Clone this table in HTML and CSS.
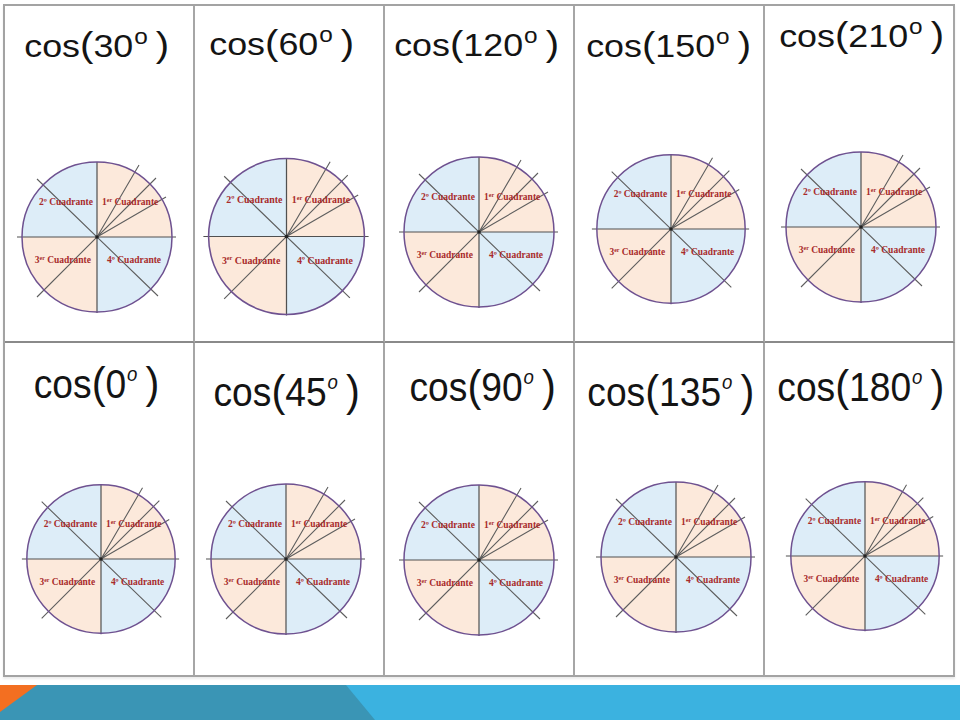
FILE: index.html
```html
<!DOCTYPE html>
<html lang="es">
<head>
<meta charset="utf-8">
<title>Cosenos por cuadrante</title>
<link rel="stylesheet" href="styles.css">
</head>
<body>
<main class="slide">
  <section class="table">
    <div class="cell top c1">
      <div class="label">cos<span class="paren">(</span>30<span class="sup">o</span><span class="paren close">)</span></div>
      <svg class="dial" viewBox="-90 -90 180 180">
        <path class="peach" d="M0 0 L0 -75 A75 75 0 0 1 75 0 Z"/>
        <path class="blue" d="M0 0 L-75 0 A75 75 0 0 1 0 -75 Z"/>
        <path class="peach" d="M0 0 L0 75 A75 75 0 0 1 -75 0 Z"/>
        <path class="blue" d="M0 0 L75 0 A75 75 0 0 1 0 75 Z"/>
        <path class="axis" d="M-80 0 H79 M0 -75 V76"/>
        <path class="ray" d="M-60 60 L59 -59 M-60 -58 L61 59 M0 0 L42 -72 M0 0 L69 -40"/>
        <circle class="rim" r="75"/>
        <circle class="dot" r="1.8"/>
        <text x="-4" y="-32" text-anchor="end">2º Cuadrante</text>
        <text x="5" y="-32">1<tspan class="ord" dy="-3">er</tspan><tspan dy="3"> Cuadrante</tspan></text>
        <text x="-6" y="26" text-anchor="end">3<tspan class="ord" dy="-3">er</tspan><tspan dy="3"> Cuadrante</tspan></text>
        <text x="10" y="26">4º Cuadrante</text>
      </svg>
    </div>
    <div class="cell top c2">
      <div class="label">cos<span class="paren">(</span>60<span class="sup">o</span><span class="paren close">)</span></div>
      <svg class="dial" viewBox="-90 -90 180 180">
        <path class="peach" d="M0 0 L0 -75 A75 75 0 0 1 75 0 Z"/>
        <path class="blue" d="M0 0 L-75 0 A75 75 0 0 1 0 -75 Z"/>
        <path class="peach" d="M0 0 L0 75 A75 75 0 0 1 -75 0 Z"/>
        <path class="blue" d="M0 0 L75 0 A75 75 0 0 1 0 75 Z"/>
        <path class="axis" d="M-80 0 H79 M0 -75 V76"/>
        <path class="ray" d="M-60 60 L59 -59 M-60 -58 L61 59 M0 0 L42 -72 M0 0 L69 -40"/>
        <circle class="rim" r="75"/>
        <circle class="dot" r="1.8"/>
        <text x="-4" y="-32" text-anchor="end">2º Cuadrante</text>
        <text x="5" y="-32">1<tspan class="ord" dy="-3">er</tspan><tspan dy="3"> Cuadrante</tspan></text>
        <text x="-6" y="26" text-anchor="end">3<tspan class="ord" dy="-3">er</tspan><tspan dy="3"> Cuadrante</tspan></text>
        <text x="10" y="26">4º Cuadrante</text>
      </svg>
    </div>
    <div class="cell top c3">
      <div class="label">cos<span class="paren">(</span>120<span class="sup">o</span><span class="paren close">)</span></div>
      <svg class="dial" viewBox="-90 -90 180 180">
        <path class="peach" d="M0 0 L0 -75 A75 75 0 0 1 75 0 Z"/>
        <path class="blue" d="M0 0 L-75 0 A75 75 0 0 1 0 -75 Z"/>
        <path class="peach" d="M0 0 L0 75 A75 75 0 0 1 -75 0 Z"/>
        <path class="blue" d="M0 0 L75 0 A75 75 0 0 1 0 75 Z"/>
        <path class="axis" d="M-80 0 H79 M0 -75 V76"/>
        <path class="ray" d="M-60 60 L59 -59 M-60 -58 L61 59 M0 0 L42 -72 M0 0 L69 -40"/>
        <circle class="rim" r="75"/>
        <circle class="dot" r="1.8"/>
        <text x="-4" y="-32" text-anchor="end">2º Cuadrante</text>
        <text x="5" y="-32">1<tspan class="ord" dy="-3">er</tspan><tspan dy="3"> Cuadrante</tspan></text>
        <text x="-6" y="26" text-anchor="end">3<tspan class="ord" dy="-3">er</tspan><tspan dy="3"> Cuadrante</tspan></text>
        <text x="10" y="26">4º Cuadrante</text>
      </svg>
    </div>
    <div class="cell top c4">
      <div class="label">cos<span class="paren">(</span>150<span class="sup">o</span><span class="paren close">)</span></div>
      <svg class="dial" viewBox="-90 -90 180 180">
        <path class="peach" d="M0 0 L0 -75 A75 75 0 0 1 75 0 Z"/>
        <path class="blue" d="M0 0 L-75 0 A75 75 0 0 1 0 -75 Z"/>
        <path class="peach" d="M0 0 L0 75 A75 75 0 0 1 -75 0 Z"/>
        <path class="blue" d="M0 0 L75 0 A75 75 0 0 1 0 75 Z"/>
        <path class="axis" d="M-80 0 H79 M0 -75 V76"/>
        <path class="ray" d="M-60 60 L59 -59 M-60 -58 L61 59 M0 0 L42 -72 M0 0 L69 -40"/>
        <circle class="rim" r="75"/>
        <circle class="dot" r="1.8"/>
        <text x="-4" y="-32" text-anchor="end">2º Cuadrante</text>
        <text x="5" y="-32">1<tspan class="ord" dy="-3">er</tspan><tspan dy="3"> Cuadrante</tspan></text>
        <text x="-6" y="26" text-anchor="end">3<tspan class="ord" dy="-3">er</tspan><tspan dy="3"> Cuadrante</tspan></text>
        <text x="10" y="26">4º Cuadrante</text>
      </svg>
    </div>
    <div class="cell top c5">
      <div class="label">cos<span class="paren">(</span>210<span class="sup">o</span><span class="paren close">)</span></div>
      <svg class="dial" viewBox="-90 -90 180 180">
        <path class="peach" d="M0 0 L0 -75 A75 75 0 0 1 75 0 Z"/>
        <path class="blue" d="M0 0 L-75 0 A75 75 0 0 1 0 -75 Z"/>
        <path class="peach" d="M0 0 L0 75 A75 75 0 0 1 -75 0 Z"/>
        <path class="blue" d="M0 0 L75 0 A75 75 0 0 1 0 75 Z"/>
        <path class="axis" d="M-80 0 H79 M0 -75 V76"/>
        <path class="ray" d="M-60 60 L59 -59 M-60 -58 L61 59 M0 0 L42 -72 M0 0 L69 -40"/>
        <circle class="rim" r="75"/>
        <circle class="dot" r="1.8"/>
        <text x="-4" y="-32" text-anchor="end">2º Cuadrante</text>
        <text x="5" y="-32">1<tspan class="ord" dy="-3">er</tspan><tspan dy="3"> Cuadrante</tspan></text>
        <text x="-6" y="26" text-anchor="end">3<tspan class="ord" dy="-3">er</tspan><tspan dy="3"> Cuadrante</tspan></text>
        <text x="10" y="26">4º Cuadrante</text>
      </svg>
    </div>

    <div class="cell bottom c6">
      <div class="label">cos<span class="paren">(</span>0<span class="sup">o</span><span class="paren close">)</span></div>
      <svg class="dial" viewBox="-90 -90 180 180">
        <path class="peach" d="M0 0 L0 -75 A75 75 0 0 1 75 0 Z"/>
        <path class="blue" d="M0 0 L-75 0 A75 75 0 0 1 0 -75 Z"/>
        <path class="peach" d="M0 0 L0 75 A75 75 0 0 1 -75 0 Z"/>
        <path class="blue" d="M0 0 L75 0 A75 75 0 0 1 0 75 Z"/>
        <path class="axis" d="M-80 0 H79 M0 -75 V76"/>
        <path class="ray" d="M-60 60 L59 -59 M-60 -58 L61 59 M0 0 L42 -72 M0 0 L69 -40"/>
        <circle class="rim" r="75"/>
        <circle class="dot" r="1.8"/>
        <text x="-4" y="-32" text-anchor="end">2º Cuadrante</text>
        <text x="5" y="-32">1<tspan class="ord" dy="-3">er</tspan><tspan dy="3"> Cuadrante</tspan></text>
        <text x="-6" y="26" text-anchor="end">3<tspan class="ord" dy="-3">er</tspan><tspan dy="3"> Cuadrante</tspan></text>
        <text x="10" y="26">4º Cuadrante</text>
      </svg>
    </div>
    <div class="cell bottom c7">
      <div class="label">cos<span class="paren">(</span>45<span class="sup">o</span><span class="paren close">)</span></div>
      <svg class="dial" viewBox="-90 -90 180 180">
        <path class="peach" d="M0 0 L0 -75 A75 75 0 0 1 75 0 Z"/>
        <path class="blue" d="M0 0 L-75 0 A75 75 0 0 1 0 -75 Z"/>
        <path class="peach" d="M0 0 L0 75 A75 75 0 0 1 -75 0 Z"/>
        <path class="blue" d="M0 0 L75 0 A75 75 0 0 1 0 75 Z"/>
        <path class="axis" d="M-80 0 H79 M0 -75 V76"/>
        <path class="ray" d="M-60 60 L59 -59 M-60 -58 L61 59 M0 0 L42 -72 M0 0 L69 -40"/>
        <circle class="rim" r="75"/>
        <circle class="dot" r="1.8"/>
        <text x="-4" y="-32" text-anchor="end">2º Cuadrante</text>
        <text x="5" y="-32">1<tspan class="ord" dy="-3">er</tspan><tspan dy="3"> Cuadrante</tspan></text>
        <text x="-6" y="26" text-anchor="end">3<tspan class="ord" dy="-3">er</tspan><tspan dy="3"> Cuadrante</tspan></text>
        <text x="10" y="26">4º Cuadrante</text>
      </svg>
    </div>
    <div class="cell bottom c8">
      <div class="label">cos<span class="paren">(</span>90<span class="sup">o</span><span class="paren close">)</span></div>
      <svg class="dial" viewBox="-90 -90 180 180">
        <path class="peach" d="M0 0 L0 -75 A75 75 0 0 1 75 0 Z"/>
        <path class="blue" d="M0 0 L-75 0 A75 75 0 0 1 0 -75 Z"/>
        <path class="peach" d="M0 0 L0 75 A75 75 0 0 1 -75 0 Z"/>
        <path class="blue" d="M0 0 L75 0 A75 75 0 0 1 0 75 Z"/>
        <path class="axis" d="M-80 0 H79 M0 -75 V76"/>
        <path class="ray" d="M-60 60 L59 -59 M-60 -58 L61 59 M0 0 L42 -72 M0 0 L69 -40"/>
        <circle class="rim" r="75"/>
        <circle class="dot" r="1.8"/>
        <text x="-4" y="-32" text-anchor="end">2º Cuadrante</text>
        <text x="5" y="-32">1<tspan class="ord" dy="-3">er</tspan><tspan dy="3"> Cuadrante</tspan></text>
        <text x="-6" y="26" text-anchor="end">3<tspan class="ord" dy="-3">er</tspan><tspan dy="3"> Cuadrante</tspan></text>
        <text x="10" y="26">4º Cuadrante</text>
      </svg>
    </div>
    <div class="cell bottom c9">
      <div class="label">cos<span class="paren">(</span>135<span class="sup">o</span><span class="paren close">)</span></div>
      <svg class="dial" viewBox="-90 -90 180 180">
        <path class="peach" d="M0 0 L0 -75 A75 75 0 0 1 75 0 Z"/>
        <path class="blue" d="M0 0 L-75 0 A75 75 0 0 1 0 -75 Z"/>
        <path class="peach" d="M0 0 L0 75 A75 75 0 0 1 -75 0 Z"/>
        <path class="blue" d="M0 0 L75 0 A75 75 0 0 1 0 75 Z"/>
        <path class="axis" d="M-80 0 H79 M0 -75 V76"/>
        <path class="ray" d="M-60 60 L59 -59 M-60 -58 L61 59 M0 0 L42 -72 M0 0 L69 -40"/>
        <circle class="rim" r="75"/>
        <circle class="dot" r="1.8"/>
        <text x="-4" y="-32" text-anchor="end">2º Cuadrante</text>
        <text x="5" y="-32">1<tspan class="ord" dy="-3">er</tspan><tspan dy="3"> Cuadrante</tspan></text>
        <text x="-6" y="26" text-anchor="end">3<tspan class="ord" dy="-3">er</tspan><tspan dy="3"> Cuadrante</tspan></text>
        <text x="10" y="26">4º Cuadrante</text>
      </svg>
    </div>
    <div class="cell bottom c10">
      <div class="label">cos<span class="paren">(</span>180<span class="sup">o</span><span class="paren close">)</span></div>
      <svg class="dial" viewBox="-90 -90 180 180">
        <path class="peach" d="M0 0 L0 -75 A75 75 0 0 1 75 0 Z"/>
        <path class="blue" d="M0 0 L-75 0 A75 75 0 0 1 0 -75 Z"/>
        <path class="peach" d="M0 0 L0 75 A75 75 0 0 1 -75 0 Z"/>
        <path class="blue" d="M0 0 L75 0 A75 75 0 0 1 0 75 Z"/>
        <path class="axis" d="M-80 0 H79 M0 -75 V76"/>
        <path class="ray" d="M-60 60 L59 -59 M-60 -58 L61 59 M0 0 L42 -72 M0 0 L69 -40"/>
        <circle class="rim" r="75"/>
        <circle class="dot" r="1.8"/>
        <text x="-4" y="-32" text-anchor="end">2º Cuadrante</text>
        <text x="5" y="-32">1<tspan class="ord" dy="-3">er</tspan><tspan dy="3"> Cuadrante</tspan></text>
        <text x="-6" y="26" text-anchor="end">3<tspan class="ord" dy="-3">er</tspan><tspan dy="3"> Cuadrante</tspan></text>
        <text x="10" y="26">4º Cuadrante</text>
      </svg>
    </div>
  </section>

  <footer class="bar">
    <svg class="bar-art" viewBox="0 0 960 35" preserveAspectRatio="none">
      <rect class="bar-sky" width="960" height="35"/>
      <polygon class="bar-teal" points="0,0 346,0 375,35 0,35"/>
      <polygon class="bar-orange" points="0,0 37,0 0,27"/>
    </svg>
  </footer>
</main>
</body>
</html>
```

FILE: styles.css
```css
html, body {
  margin: 0;
  padding: 0;
  background: #ffffff;
}

.slide {
  width: 960px;
  height: 720px;
  display: flex;
  flex-direction: column;
  overflow: hidden;
}

.table {
  margin: 4px 0 0 3px;
  width: 952px;
  box-sizing: border-box;
  display: grid;
  grid-template-columns: repeat(5, 190px);
  grid-template-rows: 337px 334px;
  border-top: 2px solid #a3a3a3;
  border-left: 2px solid #a3a3a3;
  box-shadow: 0 2px 2px rgba(0, 0, 0, 0.08);
}

.cell {
  box-sizing: border-box;
  border-right: 2px solid #a6a6a6;
  border-bottom: 2px solid #8a8a8a;
  display: flex;
  flex-direction: column;
  align-items: center;
  overflow: visible;
  --lt: 18px;
  --lx: 0px;
  --ds: 180px;
  --dt: 78px;
  --dl: 4px;
}

.cell.bottom {
  border-bottom-color: #a3a3a3;
}

.label {
  font-family: "Liberation Sans", Arial, sans-serif;
  color: #141414;
  white-space: nowrap;
  margin-top: var(--lt);
}

.top .label {
  height: 40px;
  line-height: 40px;
  font-size: 32px;
  transform: translateX(var(--lx)) scaleX(1.12);
}

.bottom .label {
  height: 48px;
  line-height: 48px;
  font-size: 40px;
  transform: translateX(var(--lx)) scaleX(0.93);
}

.paren {
  font-size: 1.12em;
  line-height: 0;
}

.paren.close {
  margin-left: 0.2em;
}

.sup {
  line-height: 0;
}

.top .sup {
  font-size: 0.68em;
  vertical-align: 0.62em;
  margin-left: 0.04em;
}

.bottom .sup {
  font-size: 0.5em;
  font-style: italic;
  vertical-align: 0.85em;
  margin-left: 0.04em;
}

.dial {
  display: block;
  align-self: flex-start;
  width: var(--ds);
  height: var(--ds);
  margin-top: var(--dt);
  margin-left: var(--dl);
  overflow: visible;
}

.dial .peach { fill: #fce9db; }
.dial .blue { fill: #ddedf8; }

.dial .axis {
  fill: none;
  stroke: #505050;
  stroke-width: 1.2;
}

.dial .ray {
  fill: none;
  stroke: #5e5e5e;
  stroke-width: 1.1;
}

.dial .rim {
  fill: none;
  stroke: #6e5190;
  stroke-width: 1.5;
}

.dial .dot { fill: #222222; }

.dial text {
  font-family: "Liberation Serif", "Times New Roman", serif;
  font-weight: bold;
  font-size: 9.5px;
  fill: #a82b2b;
}

.dial .ord { font-size: 6px; }

/* per-cell placement, matching the pasted pictures */
.c1 { --lt: 20px; --lx: -2px; --ds: 180px; --dt: 81px; --dl: 2px; }
.c2 { --lt: 18px; --lx: -7px; --ds: 187px; --dt: 79px; --dl: -2px; }
.c3 { --lt: 19px; --lx: -2px; --ds: 180px; --dt: 77px; --dl: 4px; }
.c4 { --lt: 20px; --lx: 0px;  --ds: 178px; --dt: 74px; --dl: 7px; }
.c5 { --lt: 10px; --lx: 3px;  --ds: 180px; --dt: 81px; --dl: 6px; }
.c6 { --lt: 17px; --lx: -2px; --ds: 178px; --dt: 62px; --dl: 7px; }
.c7 { --lt: 25px; --lx: -2px; --ds: 180px; --dt: 53px; --dl: 1px; }
.c8 { --lt: 20px; --lx: 4px;  --ds: 180px; --dt: 59px; --dl: 4px; }
.c9 { --lt: 25px; --lx: 2px;  --ds: 180px; --dt: 51px; --dl: 11px; }
.c10 { --lt: 20px; --lx: 2px; --ds: 178px; --dt: 56px; --dl: 11px; }

.bar {
  margin-top: auto;
  height: 35px;
}

.bar-art {
  display: block;
  width: 960px;
  height: 35px;
}

.bar-sky { fill: #3bb2e0; }
.bar-teal { fill: #3a95b5; }
.bar-orange { fill: #f36f21; }
```
